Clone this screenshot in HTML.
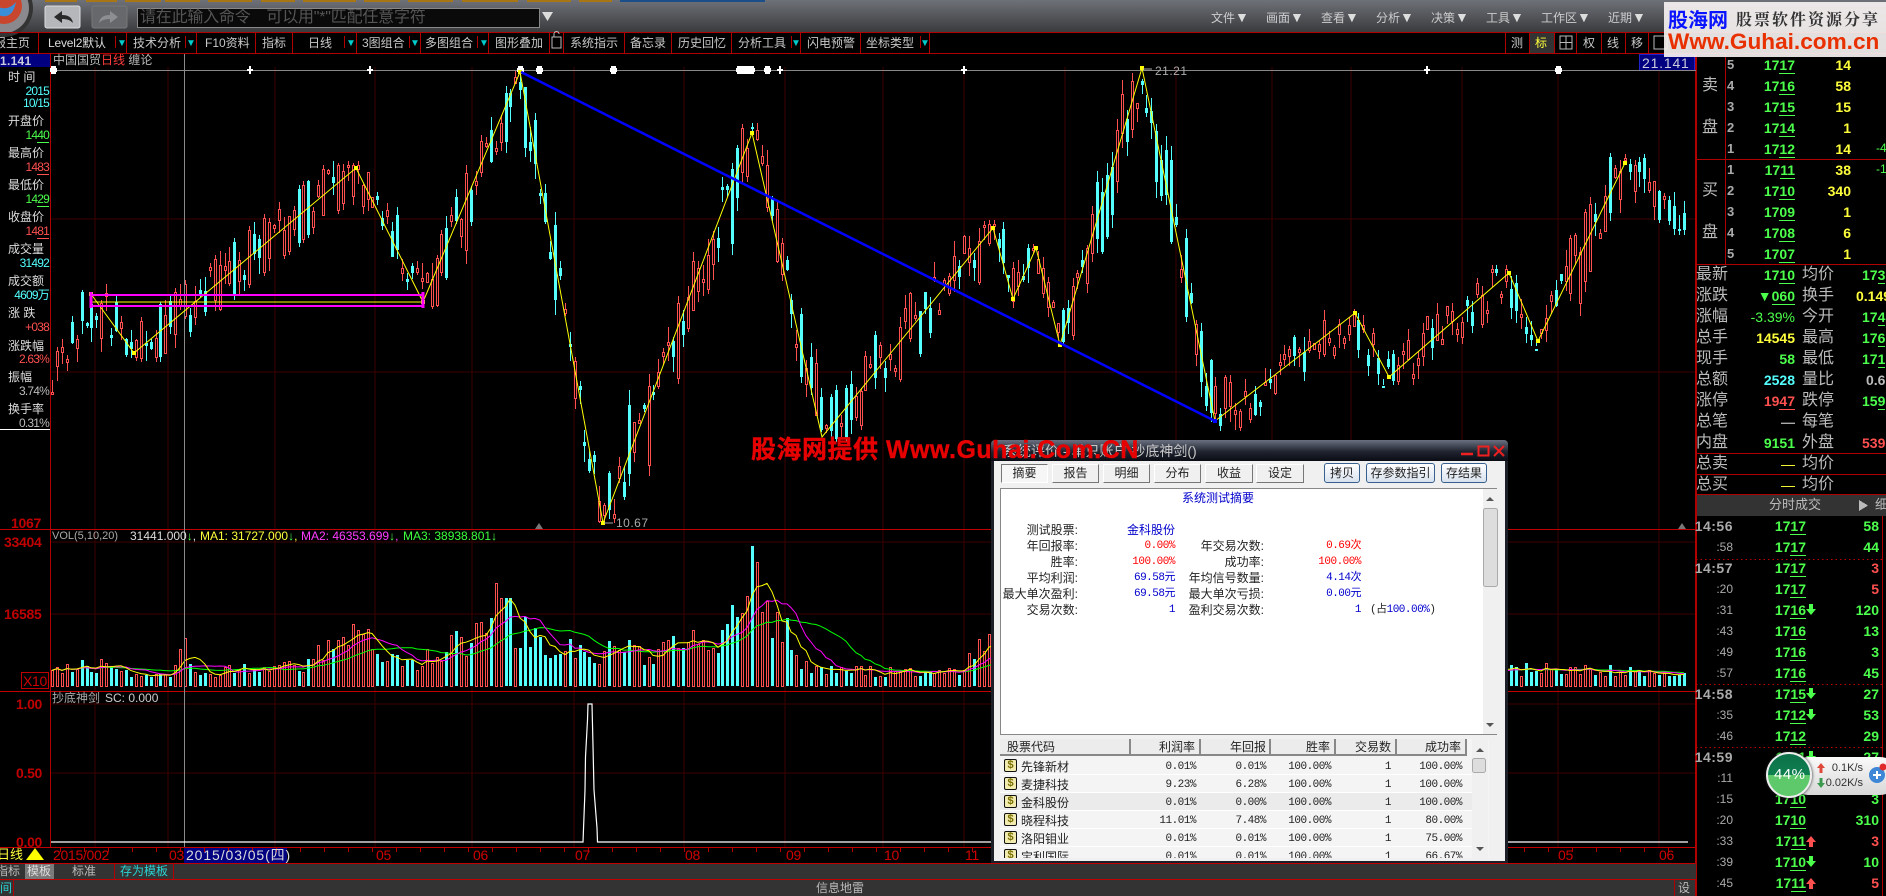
<!DOCTYPE html>
<html lang="zh"><head><meta charset="utf-8"><title>股票软件</title>
<style>
html,body{margin:0;padding:0;background:#000}
#p{position:relative;width:1886px;height:896px;overflow:hidden;background:#000;font:12px/14px "Liberation Sans","WenQuanYi Zen Hei","Noto Sans CJK SC",sans-serif;color:#c4c4c4}
#p span{position:absolute;white-space:nowrap}
svg{position:absolute;left:0;top:0}
u{text-decoration:none;border-bottom:1px solid}
.a{top:8px;color:#0cc;font-size:10px}
.tb{top:36px;font-size:12px;color:#c8c8c8}
.lb{left:8px;color:#ddd;font-size:12px}
.lv{right:1837px;font-size:12px;letter-spacing:-.8px}
.g{color:#4cff4c}.r{color:#ff5050}.c{color:#54ffff}.y{color:#ffff3c}.w{color:#bbb}
.ax{color:#c00000;font:bold 14px/16px "Liberation Sans",sans-serif;letter-spacing:-.3px}
.o{font:bold 14px/16px "Liberation Sans",sans-serif}
.ix{left:1727px;color:#aaa;font:bold 13px/16px "Liberation Sans",sans-serif}
.pr{right:91px}.vo{right:35px}
.sl{left:1696px;font-size:16px;line-height:18px;color:#bbb}
.s2{left:1802px;font-size:16px;line-height:18px;color:#bbb}
.hh{right:153px;color:#aaa;font:bold 14px/16px "Liberation Sans",sans-serif;letter-spacing:.5px}
.ss{right:153px;color:#aaa;font:12px/16px "Liberation Sans",sans-serif}
.tp{right:80px}.tv{right:7px}
.mn{top:11px;color:#ccc;font-size:12px}
.mn b{font-size:14px;font-weight:400;color:#ddd;line-height:12px}
#d{position:absolute;left:991px;top:440px;width:517px;height:423px;background:#1c1f28;border-radius:4px 4px 0 0;color:#222}
#d .b{position:absolute;left:3px;top:21px;width:511px;height:400px;background:#f0f0f0}
.tab{position:absolute;top:24px;height:17px;background:#f0f0f0;border:1px solid;border-color:#fff #777 #777 #fff;text-align:center;font-size:12px;line-height:17px;box-sizing:content-box}
.btn{position:absolute;top:23px;height:18px;background:linear-gradient(#fff,#d8e2ee);border:1px solid #35608f;border-radius:3px;text-align:center;line-height:18px;box-sizing:content-box}
.n{font:11px/14px "Liberation Mono",monospace;letter-spacing:-.5px}
.sb{color:#00c;}.sr{color:#f00}
#tbl{position:absolute;left:9px;top:299px;width:489px;height:119px;overflow:hidden;background:#f4f4f4}
.hd{position:absolute;top:0;height:15px;background:#ececec;border-right:2px solid #888;border-bottom:2px solid #888;box-sizing:content-box}
.ico{position:absolute;left:4px;width:11px;height:11px;background:#f3ecb0;border:1px solid #111;border-radius:2px;color:#7a7000;font:bold 11px/11px "Liberation Sans",sans-serif;text-align:center}
.row{position:absolute;left:0;width:475px;height:17px;border-bottom:1px solid #fff}
</style></head><body>
<div id="p">
<svg width="1886" height="896" viewBox="0 0 1886 896">
<defs><linearGradient id="top" x1="0" y1="0" x2="0" y2="1"><stop offset="0" stop-color="#6e7178"/><stop offset="1" stop-color="#3a3b3d"/></linearGradient></defs>
<rect width="1886" height="32" fill="url(#top)"/>
<g fill="#a87614"><rect x="45" y="0" width="32" height="2"/><rect x="86" y="0" width="31" height="2"/><rect x="125" y="0" width="36" height="2"/><rect x="165" y="0" width="35" height="2"/><rect x="208" y="0" width="44" height="2"/><rect x="261" y="0" width="34" height="2"/><rect x="303" y="0" width="53" height="2"/><rect x="364" y="0" width="36" height="2"/><rect x="408" y="0" width="45" height="2"/><rect x="462" y="0" width="56" height="2"/><rect x="527" y="0" width="44" height="2"/><rect x="579" y="0" width="33" height="2"/></g>
<rect x="620" y="0" width="145" height="2" fill="#1a4f8a"/>
<circle cx="4" cy="8" r="29" fill="#333"/><circle cx="4" cy="8" r="25" fill="#8a8a8e"/><circle cx="4" cy="6" r="18" fill="#c9462e"/><path d="M-4 14 Q12 22 16 2 Q8 12 -4 6Z" fill="#3b8fd8"/>
<rect x="45" y="6" width="35" height="22" rx="2" fill="#b5b7bb" stroke="#ddd"/><path d="M54 17l8-6v4c6 0 10 2 11 8-3-3-6-4-11-4v4z" fill="#2a2a2a"/>
<rect x="92" y="6" width="35" height="22" rx="2" fill="#66686c" stroke="#777"/><path d="M118 17l-8-6v4c-6 0-10 2-11 8 3-3 6-4 11-4v4z" fill="#8c8e92"/>
<rect x="137.500" y="8.500" width="402" height="19" fill="#0a0a0a" stroke="#888"/>
<path d="M542 12h11l-5.500 9z" fill="#ddd"/>
<g shape-rendering="crispEdges">
<rect x="0" y="863" width="1696" height="33" fill="#333"/>
<g stroke="#3c0000" fill="none" id="grid">
<path d="M50 219H1696M50 372H1696M50 542H1696M50 614H1696M50 704H1696M50 773H1696"/>
<path d="M95 67V847M168 67V847M275 67V847M375 67V847M472 67V847M574 67V847M684 67V847M785 67V847M883 67V847M964 67V847M1065 67V847M1176 67V847M1272 67V847M1351 67V847M1462 67V847M1558 67V847M1659 67V847"/>
</g>
<g stroke="#b00000" fill="none">
<path d="M0 32.500H1886M0 53.500H1886"/>
<path d="M38.500 32V53M126.500 32V53M196.500 32V53M255.500 32V53M292.500 32V53M356.500 32V53M420.500 32V53M488.500 32V53M549.500 32V53M563.500 32V53M624.500 32V53M671.500 32V53M731.500 32V53M800.500 32V53M860.500 32V53M929.500 32V53"/>
<path d="M115.500 36V48M185.500 36V48M344.500 36V48M409.500 36V48M477.500 36V48M791.500 36V48M920.500 36V48"/>
<path d="M1505.500 32V53M1529.500 32V53M1554.500 32V53M1576.500 32V53M1601.500 32V53M1625.500 32V53M1648.500 32V53"/>
<path d="M50.500 54V847"/>
<path d="M0 529.500H1696M0 691.500H1696M0 847.500H1696M0 863.500H1696M0 879.500H1696" stroke="#c00000"/>
<path d="M1695.500 54V864M1695.500 879V896"/>
<path d="M1696 159.500H1886M1696 264.500H1886M1696 453.500H1886M1696 474.500H1886M1696 494.500H1886M1725.500 54V264M1696.500 54V896M1882.500 516V896"/>
<path d="M114.500 863V879M173.500 863V879M13.500 879V896M1674.500 880V896"/>
<path d="M1852.500 494V516M1872.500 494V516"/>
</g>
<rect x="1697" y="495" width="189" height="21" fill="#333"/>
<path d="M1859 500l9 5.500-9 5.500z" fill="#bbb"/>
<path d="M1696 559.500H1882M1696 684.500H1882M1696 747.500H1882" stroke="#c00000" stroke-dasharray="1.500 3"/>
<rect x="0" y="54" width="50" height="13" fill="#000080"/>
<path d="M0 429.500H50" stroke="#fff"/>
<rect x="1639.500" y="54.500" width="55" height="16" fill="#000080" stroke="#2222cc"/>
<rect x="1530" y="33" width="24" height="20" fill="#333"/>
<rect x="1560" y="36" width="12" height="13" fill="none" stroke="#bbb"/><path d="M1560 42.500H1572M1566 36V49" stroke="#bbb"/>
<rect x="1654" y="36" width="13" height="13" fill="none" stroke="#bbb"/>
<rect x="21.500" y="672.500" width="27" height="16" fill="none" stroke="#c00000"/>
<rect x="184" y="848" width="103" height="15" fill="#000080"/>
<rect x="25" y="864" width="29" height="15" fill="#7a7a7a"/>
<rect x="552" y="37" width="9" height="11" fill="none" stroke="#bbb"/><path d="M554 37v-3a2 2 0 0 1 5 0" fill="none" stroke="#bbb"/>
</g>
<g id="cs"></g>
<g id="vs"></g>
<path d="M50 70.500H1696" stroke="#888" shape-rendering="crispEdges"/>
<path d="M184.500 54V847" stroke="#8a8a8a" shape-rendering="crispEdges"/>
<g id="mk" fill="#fff"></g>
<polyline fill="none" stroke="#ffff00" stroke-width="1" points="91,294 134,353 356,168 423,302 520,72 603,523 752,133 822,437 993,228 1013,299 1036,248 1060,345 1142,68 1215,421 1355,313 1389,377 1509,273 1538,341 1625,163"/>
<g fill="#ffff00"><rect x="89" y="292" width="4" height="4"/><rect x="132" y="351" width="4" height="4"/><rect x="354" y="166" width="4" height="4"/><rect x="421" y="300" width="4" height="4"/><rect x="518" y="70" width="4" height="4"/><rect x="601" y="521" width="4" height="4"/><rect x="750" y="131" width="4" height="4"/><rect x="991" y="226" width="4" height="4"/><rect x="1011" y="297" width="4" height="4"/><rect x="1034" y="246" width="4" height="4"/><rect x="1058" y="343" width="4" height="4"/><rect x="1140" y="66" width="4" height="4"/><rect x="1353" y="311" width="4" height="4"/><rect x="1387" y="375" width="4" height="4"/><rect x="1507" y="271" width="4" height="4"/><rect x="1536" y="339" width="4" height="4"/><rect x="1623" y="161" width="4" height="4"/></g>
<path d="M91 295H423M91 306H423" stroke="#ff00ff" stroke-width="2" shape-rendering="crispEdges"/>
<path d="M91 302H423" stroke="#ffff00" stroke-width="1" shape-rendering="crispEdges"/>
<path d="M91 292V308M423 292V308" stroke="#ff00ff" stroke-width="3" shape-rendering="crispEdges"/>
<path d="M521 72L1215 421" stroke="#0000ff" stroke-width="2.500"/>
<rect x="1213" y="419" width="4" height="4" fill="#0000ff"/>
<path d="M604 523H613M1143 69H1152" stroke="#aaa"/>
<path d="M535 529l4-6 4 6zM1678 529l4-6 4 6z" fill="#777"/>
<polyline fill="none" stroke="#fff" stroke-width="1.200" points="51,842 583,842 585,790 585.500,757 587.500,720 588,704 592,704 593,746 594,790 597,828 597.500,842 1688,842"/>
<g id="ticks" stroke="#b00000"></g>
<path d="M26 860l9-12 9 12z" fill="#ffff00"/>
</svg>

<span class="tb" style="left:-6px">报主页</span>
<span class="tb" style="left:48px;color:#ddd;letter-spacing:-.2px">Level2默认</span><span class="a" style="left:117px;top:37px">▼</span>
<span class="tb" style="left:133px">技术分析</span><span class="a" style="left:186px;top:37px">▼</span>
<span class="tb" style="left:205px">F10资料</span>
<span class="tb" style="left:262px">指标</span>
<span class="tb" style="left:308px">日线</span><span class="a" style="left:346px;top:37px">▼</span>
<span class="tb" style="left:362px">3图组合</span><span class="a" style="left:410px;top:37px">▼</span>
<span class="tb" style="left:425px">多图组合</span><span class="a" style="left:479px;top:37px">▼</span>
<span class="tb" style="left:495px">图形叠加</span>
<span class="tb" style="left:570px">系统指示</span>
<span class="tb" style="left:630px">备忘录</span>
<span class="tb" style="left:678px">历史回忆</span>
<span class="tb" style="left:738px">分析工具</span><span class="a" style="left:791px;top:37px">▼</span>
<span class="tb" style="left:807px">闪电预警</span>
<span class="tb" style="left:866px">坐标类型</span><span class="a" style="left:920px;top:37px">▼</span>
<span class="tb" style="left:1511px">测</span><span class="tb y" style="left:1535px;color:#ffff3c">标</span><span class="tb" style="left:1583px">权</span><span class="tb" style="left:1607px">线</span><span class="tb" style="left:1631px">移</span>
<span style="left:140px;top:9px;font-size:16px;line-height:18px;color:#555;letter-spacing:-.2px">请在此输入命令　可以用"*"匹配任意字符</span>

<span class="mn" style="left:1211px">文件<b>▼</b></span><span class="mn" style="left:1266px">画面<b>▼</b></span><span class="mn" style="left:1321px">查看<b>▼</b></span><span class="mn" style="left:1376px">分析<b>▼</b></span><span class="mn" style="left:1431px">决策<b>▼</b></span><span class="mn" style="left:1486px">工具<b>▼</b></span><span class="mn" style="left:1541px">工作区<b>▼</b></span><span class="mn" style="left:1608px">近期<b>▼</b></span>

<span style="left:53px;top:53px;color:#bbb">中国国贸<b style="color:#ff3c3c;font-weight:400">日线</b> 缠论</span>
<span style="left:-7px;top:54px;color:#ccd;font:bold 12px/14px 'Liberation Sans',sans-serif;letter-spacing:.3px">21.141</span>
<span style="left:1642px;top:56px;color:#ccd;font:14px/14px 'Liberation Sans',sans-serif;letter-spacing:.8px">21.141</span>

<span class="lb" style="top:70px">时 间</span><span class="lv c" style="top:84px">2015</span><span class="lv c" style="top:96px">10/15</span>
<span class="lb" style="top:114px">开盘价</span><span class="lv g" style="top:128px">14<u>40</u></span>
<span class="lb" style="top:146px">最高价</span><span class="lv r" style="top:160px">14<u>83</u></span>
<span class="lb" style="top:178px">最低价</span><span class="lv g" style="top:192px">14<u>29</u></span>
<span class="lb" style="top:210px">收盘价</span><span class="lv r" style="top:224px">14<u>81</u></span>
<span class="lb" style="top:242px">成交量</span><span class="lv c" style="top:256px">31492</span>
<span class="lb" style="top:274px">成交额</span><span class="lv c" style="top:288px">4609万</span>
<span class="lb" style="top:306px">涨 跌</span><span class="lv r" style="top:320px">+038</span>
<span class="lb" style="top:339px">涨跌幅</span><span class="lv r" style="top:352px">2.63%</span>
<span class="lb" style="top:370px">振幅</span><span class="lv w" style="top:384px">3.74%</span>
<span class="lb" style="top:402px">换手率</span><span class="lv w" style="top:416px">0.31%</span>

<span class="ax" style="left:11px;top:515px">1067</span>
<span class="ax" style="left:4px;top:534px">33404</span>
<span class="ax" style="left:4px;top:606px">16585</span>
<span class="ax" style="left:23px;top:673px;color:#d00000;font-weight:400">X10</span>
<span class="ax" style="left:16px;top:696px">1.00</span><span class="ax" style="left:16px;top:765px">0.50</span><span class="ax" style="left:16px;top:834px">0.00</span>

<span style="left:1155px;top:64px;color:#aaa;letter-spacing:.5px">21.21</span>
<span style="left:616px;top:516px;color:#aaa;letter-spacing:.5px">10.67</span>
<span style="left:52px;top:529px;color:#aaa;font-size:11px">VOL(5,10,20)</span>
<span style="left:130px;top:529px;color:#ddd;font-size:12px">31441.000<b style="color:#4cff4c">↓</b>,</span>
<span style="left:200px;top:529px;color:#ffff3c;font-size:12px">MA1: 31727.000<b style="color:#4cff4c">↓</b>,</span>
<span style="left:301px;top:529px;color:#ff3cff;font-size:12px">MA2: 46353.699<b style="color:#4cff4c">↓</b>,</span>
<span style="left:403px;top:529px;color:#3cff3c;font-size:12px">MA3: 38938.801<b style="color:#4cff4c">↓</b></span>
<span style="left:52px;top:691px;color:#aaa">抄底神剑</span><span style="left:105px;top:691px;color:#ccc">SC: 0.000</span>

<span style="left:-3px;top:848px;color:#ffff3c;font-size:13px">日线</span>
<span class="ax" style="left:53px;top:847px;font-weight:400;color:#d00000">2015/002</span>
<span class="ax" style="left:169px;top:847px;font-weight:400;color:#d00000">03</span>
<span style="left:186px;top:848px;color:#ddd;font-size:14px;letter-spacing:.9px">2015/03/05(四)</span>
<span class="ax" style="left:376px;top:847px;font-weight:400;color:#d00000">05</span>
<span class="ax" style="left:473px;top:847px;font-weight:400;color:#d00000">06</span>
<span class="ax" style="left:575px;top:847px;font-weight:400;color:#d00000">07</span>
<span class="ax" style="left:685px;top:847px;font-weight:400;color:#d00000">08</span>
<span class="ax" style="left:786px;top:847px;font-weight:400;color:#d00000">09</span>
<span class="ax" style="left:884px;top:847px;font-weight:400;color:#d00000">10</span>
<span class="ax" style="left:965px;top:847px;font-weight:400;color:#d00000">11</span>
<span class="ax" style="left:1558px;top:847px;font-weight:400;color:#d00000">05</span>
<span class="ax" style="left:1659px;top:847px;font-weight:400;color:#d00000">06</span>
<span style="left:-4px;top:864px;color:#bbb">指标</span><span style="left:27px;top:864px;color:#ddd">模板</span><span style="left:72px;top:864px;color:#bbb">标准</span><span style="left:120px;top:864px;color:#2ad4d4">存为模板</span>
<span style="left:0;top:881px;color:#2ad4d4">间</span><span style="left:816px;top:881px;color:#bbb">信息地雷</span><span style="left:1678px;top:881px;color:#bbb">设</span>

<!-- order book -->
<span class="sl" style="left:1702px;top:77px">卖</span><span class="sl" style="left:1702px;top:119px">盘</span><span class="sl" style="left:1702px;top:182px">买</span><span class="sl" style="left:1702px;top:224px">盘</span>
<span class="ix" style="top:57px">5</span><span class="o g pr" style="top:57px">17<u>17</u></span><span class="o y vo" style="top:57px">14</span>
<span class="ix" style="top:78px">4</span><span class="o g pr" style="top:78px">17<u>16</u></span><span class="o y vo" style="top:78px">58</span>
<span class="ix" style="top:99px">3</span><span class="o g pr" style="top:99px">17<u>15</u></span><span class="o y vo" style="top:99px">15</span>
<span class="ix" style="top:120px">2</span><span class="o g pr" style="top:120px">17<u>14</u></span><span class="o y vo" style="top:120px">1</span>
<span class="ix" style="top:141px">1</span><span class="o g pr" style="top:141px">17<u>12</u></span><span class="o y vo" style="top:141px">14</span><span class="g" style="left:1876px;top:141px">-4</span>
<span class="ix" style="top:162px">1</span><span class="o g pr" style="top:162px">17<u>11</u></span><span class="o y vo" style="top:162px">38</span><span class="g" style="left:1876px;top:162px">-1</span>
<span class="ix" style="top:183px">2</span><span class="o g pr" style="top:183px">17<u>10</u></span><span class="o y vo" style="top:183px">340</span>
<span class="ix" style="top:204px">3</span><span class="o g pr" style="top:204px">17<u>09</u></span><span class="o y vo" style="top:204px">1</span>
<span class="ix" style="top:225px">4</span><span class="o g pr" style="top:225px">17<u>08</u></span><span class="o y vo" style="top:225px">6</span>
<span class="ix" style="top:246px">5</span><span class="o g pr" style="top:246px">17<u>07</u></span><span class="o y vo" style="top:246px">1</span>

<span class="sl" style="top:266px">最新</span><span class="o g pr" style="top:267px">17<u>10</u></span><span class="s2" style="top:266px">均价</span><span class="o g" style="left:1862px;top:267px">17<u>3</u></span>
<span class="sl" style="top:287px">涨跌</span><span class="o g pr" style="top:288px">▼<u>060</u></span><span class="s2" style="top:287px">换手</span><span class="o y" style="left:1856px;top:288px">0.149</span>
<span class="sl" style="top:308px">涨幅</span><span class="o g pr" style="top:309px;font-weight:400">-3.39%</span><span class="s2" style="top:308px">今开</span><span class="o g" style="left:1862px;top:309px">17<u>4</u></span>
<span class="sl" style="top:329px">总手</span><span class="o y pr" style="top:330px">14545</span><span class="s2" style="top:329px">最高</span><span class="o g" style="left:1862px;top:330px">17<u>6</u></span>
<span class="sl" style="top:350px">现手</span><span class="o g pr" style="top:351px">58</span><span class="s2" style="top:350px">最低</span><span class="o g" style="left:1862px;top:351px">17<u>1</u></span>
<span class="sl" style="top:371px">总额</span><span class="o c pr" style="top:372px">2528</span><span class="s2" style="top:371px">量比</span><span class="o" style="left:1866px;top:372px;color:#bbb">0.6</span>
<span class="sl" style="top:392px">涨停</span><span class="o r pr" style="top:393px">19<u>47</u></span><span class="s2" style="top:392px">跌停</span><span class="o g" style="left:1862px;top:393px">15<u>9</u></span>
<span class="sl" style="top:413px">总笔</span><span class="o pr" style="top:414px;color:#aaa">—</span><span class="s2" style="top:413px">每笔</span>
<span class="sl" style="top:434px">内盘</span><span class="o g pr" style="top:435px">9151</span><span class="s2" style="top:434px">外盘</span><span class="o r" style="left:1862px;top:435px">539</span>
<span class="sl" style="top:455px">总卖</span><span class="o y pr" style="top:456px;font-weight:400">—</span><span class="s2" style="top:455px">均价</span>
<span class="sl" style="top:476px">总买</span><span class="o y pr" style="top:477px;font-weight:400">—</span><span class="s2" style="top:476px">均价</span>
<span style="left:1769px;top:498px;font-size:13px;color:#bbb">分时成交</span><span style="left:1875px;top:498px;font-size:13px;color:#bbb">细</span>

<!-- ticks -->
<span class="hh" style="top:518px">14:56</span><span class="o g tp" style="top:518px">17<u>17</u></span><span class="o g tv" style="top:518px">58</span>
<span class="ss" style="top:539px">:58</span><span class="o g tp" style="top:539px">17<u>17</u></span><span class="o g tv" style="top:539px">44</span>
<span class="hh" style="top:560px">14:57</span><span class="o g tp" style="top:560px">17<u>17</u></span><span class="o r tv" style="top:560px">3</span>
<span class="ss" style="top:581px">:20</span><span class="o g tp" style="top:581px">17<u>17</u></span><span class="o r tv" style="top:581px">5</span>
<span class="ss" style="top:602px">:31</span><span class="o g tp" style="top:602px">17<u>16</u></span><span class="o g tv" style="top:602px">120</span>
<span class="ss" style="top:623px">:43</span><span class="o g tp" style="top:623px">17<u>16</u></span><span class="o g tv" style="top:623px">13</span>
<span class="ss" style="top:644px">:49</span><span class="o g tp" style="top:644px">17<u>16</u></span><span class="o g tv" style="top:644px">3</span>
<span class="ss" style="top:665px">:57</span><span class="o g tp" style="top:665px">17<u>16</u></span><span class="o g tv" style="top:665px">45</span>
<span class="hh" style="top:686px">14:58</span><span class="o g tp" style="top:686px">17<u>15</u></span><span class="o g tv" style="top:686px">27</span>
<span class="ss" style="top:707px">:35</span><span class="o g tp" style="top:707px">17<u>12</u></span><span class="o g tv" style="top:707px">53</span>
<span class="ss" style="top:728px">:46</span><span class="o g tp" style="top:728px">17<u>12</u></span><span class="o g tv" style="top:728px">29</span>
<span class="hh" style="top:749px">14:59</span><span class="o g tp" style="top:749px">17<u>11</u></span><span class="o g tv" style="top:749px">27</span>
<span class="ss" style="top:770px">:11</span><span class="o g tp" style="top:770px">17<u>10</u></span><span class="o g tv" style="top:770px">15</span>
<span class="ss" style="top:791px">:15</span><span class="o g tp" style="top:791px">17<u>10</u></span><span class="o g tv" style="top:791px">3</span>
<span class="ss" style="top:812px">:20</span><span class="o g tp" style="top:812px">17<u>10</u></span><span class="o g tv" style="top:812px">310</span>
<span class="ss" style="top:833px">:33</span><span class="o g tp" style="top:833px">17<u>11</u></span><span class="o r tv" style="top:833px">3</span>
<span class="ss" style="top:854px">:39</span><span class="o g tp" style="top:854px">17<u>10</u></span><span class="o g tv" style="top:854px">10</span>
<span class="ss" style="top:875px">:45</span><span class="o g tp" style="top:875px">17<u>11</u></span><span class="o r tv" style="top:875px">5</span>
<svg width="1886" height="896" style="left:0;top:0;pointer-events:none">
<g fill="#4cff4c"><path id="dn" d="M1809 604h4v5h3l-5 6-5-6h3z"/><path d="M1809 688h4v5h3l-5 6-5-6h3z"/><path d="M1809 709h4v5h3l-5 6-5-6h3z"/><path d="M1809 751h4v5h3l-5 6-5-6h3z"/><path d="M1809 856h4v5h3l-5 6-5-6h3z"/></g>
<g fill="#ff5050"><path d="M1809 847h4v-5h3l-5-6-5 6h3z"/><path d="M1809 889h4v-5h3l-5-6-5 6h3z"/></g>
</svg>

<!-- logo box -->
<div style="position:absolute;left:1664px;top:2px;width:222px;height:55px;background:rgba(245,240,240,.93)"></div>
<span style="left:1668px;top:6px;font:bold 20px/26px 'WenQuanYi Zen Hei','Noto Sans CJK SC',sans-serif;color:#0a14ff">股海网</span>
<span style="left:1736px;top:10px;font:bold 16px/18px 'Noto Serif CJK SC','WenQuanYi Zen Hei',serif;color:#333;letter-spacing:2px">股票软件资源分享</span>
<span style="left:1668px;top:28px;font:bold 22.600px/28px 'Liberation Sans',sans-serif;color:#e83000">Www.Guhai.com.cn</span>

<!-- dialog -->
<div id="d">
<div style="position:absolute;left:0;top:0;width:517px;height:21px;border-radius:4px 4px 0 0;background:linear-gradient(#6a7080,#202430 55%,#0a0c14)"></div>
<span style="left:12px;top:4px;color:#c8c8c8;font-size:14px">系统评价 - 单只账户 抄底神剑()</span>
<svg width="517" height="21" style="left:0;top:0"><path d="M470 14h12" stroke="#f02020" stroke-width="2.500"/><rect x="487.500" y="6.500" width="10" height="9" fill="none" stroke="#f02020" stroke-width="2"/><path d="M503 6l10 10M513 6l-10 10" stroke="#f02020" stroke-width="2"/></svg>
<div class="b"></div>
<div class="tab" style="left:10px;width:45px;border-color:#777 #fff #fff #777;background:#f6f6f6">摘要</div>
<div class="tab" style="left:61px;width:45px">报告</div>
<div class="tab" style="left:112px;width:45px">明细</div>
<div class="tab" style="left:163px;width:45px">分布</div>
<div class="tab" style="left:214px;width:46px">收益</div>
<div class="tab" style="left:265px;width:46px">设定</div>
<div class="btn" style="left:333px;width:34px">拷贝</div>
<div class="btn" style="left:375px;width:67px">存参数指引</div>
<div class="btn" style="left:450px;width:44px">存结果</div>
<div style="position:absolute;left:9px;top:48px;width:497px;height:247px;background:#fff;border:1px solid #888;box-sizing:border-box"></div>
<span class="sb" style="left:191px;top:51px">系统测试摘要</span>
<span style="right:430px;top:83px">测试股票:</span><span class="sb" style="right:333px;top:83px">金科股份</span>
<span style="right:430px;top:99px">年回报率:</span><span class="sr n" style="right:333px;top:99px">0.00%</span><span style="right:244px;top:99px">年交易次数:</span><span class="sr n" style="right:147px;top:99px">0.69次</span>
<span style="right:430px;top:115px">胜率:</span><span class="sr n" style="right:333px;top:115px">100.00%</span><span style="right:244px;top:115px">成功率:</span><span class="sr n" style="right:147px;top:115px">100.00%</span>
<span style="right:430px;top:131px">平均利润:</span><span class="sb n" style="right:333px;top:131px">69.58元</span><span style="right:244px;top:131px">年均信号数量:</span><span class="sb n" style="right:147px;top:131px">4.14次</span>
<span style="right:430px;top:147px">最大单次盈利:</span><span class="sb n" style="right:333px;top:147px">69.58元</span><span style="right:244px;top:147px">最大单次亏损:</span><span class="sb n" style="right:147px;top:147px">0.00元</span>
<span style="right:430px;top:163px">交易次数:</span><span class="sb n" style="right:333px;top:163px">1</span><span style="right:244px;top:163px">盈利交易次数:</span><span class="sb n" style="right:147px;top:163px">1</span><span class="n" style="left:379px;top:163px">(占<b class="sb" style="font-weight:400">100.00%</b>)</span>
<svg width="517" height="423" style="left:0;top:0"><rect x="492" y="49" width="14" height="245" fill="#f0f0f0"/><path d="M495 61h8l-4-4z" fill="#555"/><path d="M495 283h8l-4 4z" fill="#555"/><rect x="492.500" y="68.500" width="14" height="78" rx="2" fill="#ddd" stroke="#aaa"/></svg>

<div id="tbl">
<div class="hd" style="left:0;width:129px"></div><div class="hd" style="left:131px;width:68px"></div><div class="hd" style="left:201px;width:68px"></div><div class="hd" style="left:271px;width:63px"></div><div class="hd" style="left:336px;width:59px"></div><div class="hd" style="left:397px;width:68px"></div>
<span style="left:7px;top:1px">股票代码</span><span style="right:294px;top:1px">利润率</span><span style="right:223px;top:1px">年回报</span><span style="right:159px;top:1px">胜率</span><span style="right:98px;top:1px">交易数</span><span style="right:28px;top:1px">成功率</span>

<div class="row" style="top:18px"></div><div class="row" style="top:36px"></div><div class="row" style="top:54px;background:#ebebeb"></div><div class="row" style="top:72px"></div><div class="row" style="top:90px"></div><div class="row" style="top:108px"></div>

<div class="ico" style="top:20px">$</div><span style="left:21px;top:21px">先锋新材</span><span class="n" style="right:293px;top:21px">0.01%</span><span class="n" style="right:223px;top:21px">0.01%</span><span class="n" style="right:158px;top:21px">100.00%</span><span class="n" style="right:98px;top:21px">1</span><span class="n" style="right:27px;top:21px">100.00%</span>
<div class="ico" style="top:38px">$</div><span style="left:21px;top:39px">麦捷科技</span><span class="n" style="right:293px;top:39px">9.23%</span><span class="n" style="right:223px;top:39px">6.28%</span><span class="n" style="right:158px;top:39px">100.00%</span><span class="n" style="right:98px;top:39px">1</span><span class="n" style="right:27px;top:39px">100.00%</span>
<div class="ico" style="top:56px">$</div><span style="left:21px;top:57px">金科股份</span><span class="n" style="right:293px;top:57px">0.01%</span><span class="n" style="right:223px;top:57px">0.00%</span><span class="n" style="right:158px;top:57px">100.00%</span><span class="n" style="right:98px;top:57px">1</span><span class="n" style="right:27px;top:57px">100.00%</span>
<div class="ico" style="top:74px">$</div><span style="left:21px;top:75px">晓程科技</span><span class="n" style="right:293px;top:75px">11.01%</span><span class="n" style="right:223px;top:75px">7.48%</span><span class="n" style="right:158px;top:75px">100.00%</span><span class="n" style="right:98px;top:75px">1</span><span class="n" style="right:27px;top:75px">80.00%</span>
<div class="ico" style="top:92px">$</div><span style="left:21px;top:93px">洛阳钼业</span><span class="n" style="right:293px;top:93px">0.01%</span><span class="n" style="right:223px;top:93px">0.01%</span><span class="n" style="right:158px;top:93px">100.00%</span><span class="n" style="right:98px;top:93px">1</span><span class="n" style="right:27px;top:93px">75.00%</span>
<div class="ico" style="top:110px">$</div><span style="left:21px;top:111px">宝利国际</span><span class="n" style="right:293px;top:111px">0.01%</span><span class="n" style="right:223px;top:111px">0.01%</span><span class="n" style="right:158px;top:111px">100.00%</span><span class="n" style="right:98px;top:111px">1</span><span class="n" style="right:27px;top:111px">66.67%</span>

<svg width="489" height="119" style="left:0;top:0"><rect x="472" y="0" width="16" height="119" fill="#f0f0f0"/><path d="M476 13h8l-4-4z" fill="#555"/><path d="M476 108h8l-4 4z" fill="#555"/><rect x="472.500" y="19.500" width="13" height="14" rx="2" fill="#ddd" stroke="#aaa"/></svg>
</div>
</div>

<!-- floating widget -->
<div style="position:absolute;left:1789px;top:757px;width:110px;height:38px;border-radius:19px;background:linear-gradient(#fafafa,#d8d8d8)"></div>
<div style="position:absolute;left:1766px;top:752px;width:46px;height:46px;border-radius:50%;background:linear-gradient(#0c7048 0,#0f8050 50%,#5dc96a 50%,#5dc96a 100%);border:2px solid #eee;box-sizing:border-box;box-shadow:0 0 3px #222"></div>
<span style="left:1774px;top:767px;color:#fff;font:15px/16px 'Liberation Sans',sans-serif;letter-spacing:.5px">44%</span>
<svg width="1886" height="896" style="left:0;top:0;pointer-events:none"><path d="M1821 763l-4 5h2.500v5h3v-5h2.500z" fill="#e0483a"/><path d="M1821 788l-4-5h2.500v-5h3v5h2.500z" fill="#3a9a50"/><circle cx="1877" cy="775" r="8" fill="#3e86d6"/><path d="M1877 771v8M1873 775h8" stroke="#fff" stroke-width="2"/><circle cx="1883" cy="767" r="3.500" fill="#e02a2a"/></svg>
<span style="right:23px;top:761px;color:#333;font-size:11px">0.1K/s</span><span style="right:23px;top:776px;color:#333;font-size:11px">0.02K/s</span>

<span style="left:751px;top:435px;font:bold 25px/30px 'Liberation Sans','Noto Sans CJK SC',sans-serif;color:#e60000;letter-spacing:.5px;-webkit-text-stroke:.4px #e60000">股海网提供 Www.Guhai.Com.CN</span>
</div>

<script>
(function(){
var s=20150305;function R(){s=(s*1664525+1013904223)>>>0;return s/4294967296}
var P=[[50,385],[91,294],[134,353],[356,168],[423,302],[520,72],[603,523],[752,133],[822,437],[993,228],[1013,299],[1036,248],[1060,345],[1142,68],[1215,421],[1355,313],[1389,377],[1509,273],[1538,341],[1625,163],[1688,225]];
var E=[[50,18],[90,30],[130,15],[170,18],[184,50],[195,15],[240,22],[300,25],[335,62],[365,58],[380,40],[420,30],[450,60],[470,62],[490,110],[505,92],[530,70],[560,45],[600,45],[640,45],[660,45],[690,55],[725,62],[745,130],[752,140],[765,85],[785,72],[795,40],[820,22],[900,18],[960,18],[975,45],[990,50],[1100,30],[1500,20],[1560,24],[1620,20],[1688,12]];
function L(T,x){for(var i=1;i<T.length;i++){if(x<=T[i][0]){var a=T[i-1],b=T[i],t=(x-a[0])/(b[0]-a[0]);return{y:a[1]+(b[1]-a[1])*t,k:b[1]-a[1]}}}var z=T[T.length-1];return{y:z[1],k:0}}
function B(x){var lo=1e9,hi=-1e9;for(var d=-25;d<=25;d+=5){var y=L(P,Math.max(50,x+d)).y;if(y<lo)lo=y;if(y>hi)hi=y}return[lo,hi]}
var c='',v='',H=[],X=[];
var base=686;
for(var x=52;x<1688;x+=4.93){
 var q=L(P,x),X0=Math.round(x),up=q.k<0?R()<.7:R()<.35;
 var e=B(x);
 var m=q.y+(R()-.5)*46,l=3+Math.pow(R(),2.2)*(Math.abs(q.k)>150?80:36);
 var t=m-l/2,b=m+l/2;
 t=Math.max(t,e[0]-6,72);b=Math.min(b,e[1]+6,521);if(b<t+2)b=t+2;
 var wt=Math.max(t-R()*16,e[0]-10,70),wb=Math.min(b+R()*16,e[1]+10,523);
 var col=up?'#ff5050':'#54ffff';
 c+='<path d="M'+(X0+.5)+' '+wt.toFixed(0)+'V'+wb.toFixed(0)+'" stroke="'+col+'" shape-rendering="crispEdges"/>';
 if(up)c+='<rect x="'+(X0-1+.5)+'" y="'+(Math.round(t)+.5)+'" width="2" height="'+Math.max(1,Math.round(b-t))+'" fill="#000" stroke="'+col+'" shape-rendering="crispEdges"/>';
 else c+='<rect x="'+(X0-1)+'" y="'+Math.round(t)+'" width="3" height="'+Math.max(2,Math.round(b-t))+'" fill="'+col+'" shape-rendering="crispEdges"/>';
 var h=L(E,x).y*(.45+R()*.6);
 if(Math.abs(x-752)<4||Math.abs(x-495)<4)h=L(E,x).y;
 H.push(h);X.push(X0);
 if(up)v+='<rect x="'+(X0-1+.5)+'" y="'+(Math.round(base-h)+.5)+'" width="2" height="'+Math.round(h)+'" fill="#000" stroke="#ff5050" shape-rendering="crispEdges"/>';
 else v+='<rect x="'+(X0-1)+'" y="'+Math.round(base-h)+'" width="3" height="'+Math.round(h)+'" fill="#54ffff" shape-rendering="crispEdges"/>';
}
function MA(n,col){var p=[];for(var i=0;i<H.length;i++){var a=0,c2=0;for(var j=Math.max(0,i-n+1);j<=i;j++){a+=H[j];c2++}p.push(X[i]+','+(base-a/c2).toFixed(1))}return'<polyline fill="none" stroke="'+col+'" stroke-width="1" points="'+p.join(' ')+'"/>'}
v+=MA(20,'#00ff00')+MA(10,'#ff00ff')+MA(5,'#ffff00');
document.getElementById('cs').innerHTML=c;
document.getElementById('vs').innerHTML=v;
var mk='',stars=[53,520,539,612.5,739,743,747,751,766.6,1557.5],plus=[250,370,780,964,1427];
stars.forEach(function(a){a=Math.round(a);mk+='<rect x="'+(a-2)+'" y="66" width="5" height="8"/><rect x="'+(a-3)+'" y="68" width="7" height="4"/>'});
plus.forEach(function(a){mk+='<rect x="'+(a-1)+'" y="66" width="2" height="8"/><rect x="'+(a-3)+'" y="69" width="6" height="2"/>'});
document.getElementById('mk').innerHTML=mk;
var tk='';for(var x2=60;x2<1690;x2+=24){tk+='<path d="M'+x2+'.5 848V852"/>'}
document.getElementById('ticks').innerHTML=tk;
})();
</script>
</body></html>
